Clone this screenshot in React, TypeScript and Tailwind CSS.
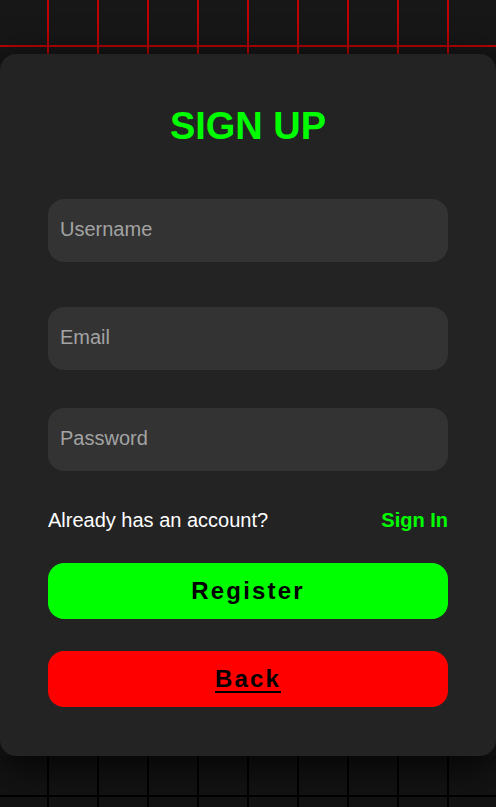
import React, { useState } from 'react';

// Sign up card over a grid background
export default function App() {
  const [username, setUsername] = useState('');
  const [email, setEmail] = useState('');
  const [password, setPassword] = useState('');

  return (
    <div
      className="min-h-screen flex flex-col bg-[#171717]"
      style={{ fontFamily: '"Liberation Sans", Arial, sans-serif' }}
    >
      {/* Top strip - red grid */}
      <div className="h-[54px] shrink-0 bg-[#171717] bg-[linear-gradient(to_right,#c00000_0px,#c00000_2px,transparent_2px),linear-gradient(to_bottom,#c00000_0px,#c00000_2px,transparent_2px)] bg-[size:50px_50px] bg-[position:47px_45px]" />

      {/* Card */}
      <div className="relative z-10 w-full bg-[#232323] rounded-2xl shadow-[0_8px_40px_rgba(0,0,0,0.85)] px-12 pt-[50px] pb-[49px]">
        <h1 className="text-[38px] leading-[44px] font-bold text-[#00ff00] text-center">SIGN UP</h1>

        <form className="flex flex-col" onSubmit={(e) => e.preventDefault()}>
          <input
            type="text"
            value={username}
            onChange={(e) => setUsername(e.target.value)}
            placeholder="Username"
            className="mt-[51px] h-[63px] w-full rounded-2xl bg-[#333333] pl-3 pb-0.5 text-[20px] text-white placeholder:text-[#a3a3a3] outline-none"
          />
          <input
            type="email"
            value={email}
            onChange={(e) => setEmail(e.target.value)}
            placeholder="Email"
            className="mt-[45px] h-[63px] w-full rounded-2xl bg-[#333333] pl-3 pb-0.5 text-[20px] text-white placeholder:text-[#a3a3a3] outline-none"
          />
          <input
            type="password"
            value={password}
            onChange={(e) => setPassword(e.target.value)}
            placeholder="Password"
            className="mt-[38px] h-[63px] w-full rounded-2xl bg-[#333333] pl-3 pb-0.5 text-[20px] text-white placeholder:text-[#a3a3a3] outline-none"
          />

          <div className="mt-[35px] flex items-center justify-between text-[20px] leading-[28px]">
            <span className="text-white">Already has an account?</span>
            <a href="#" className="font-bold text-[#00ff00]">Sign In</a>
          </div>

          <button
            type="submit"
            className="mt-[29px] h-14 w-full rounded-2xl bg-[#00ff00] text-[24px] font-bold tracking-[0.09em] text-black"
          >
            Register
          </button>
          <button
            type="button"
            className="mt-8 h-14 w-full rounded-2xl bg-[#ff0000] text-[24px] font-bold tracking-[0.09em] text-black underline underline-offset-4"
          >
            Back
          </button>
        </form>
      </div>

      {/* Bottom strip - dark grid */}
      <div className="flex-1 min-h-[51px] bg-[#131313] bg-[linear-gradient(to_right,#000_0px,#000_2px,transparent_2px),linear-gradient(to_bottom,#000_0px,#000_2px,transparent_2px)] bg-[size:50px_50px] bg-[position:47px_39px]" />
    </div>
  );
}
